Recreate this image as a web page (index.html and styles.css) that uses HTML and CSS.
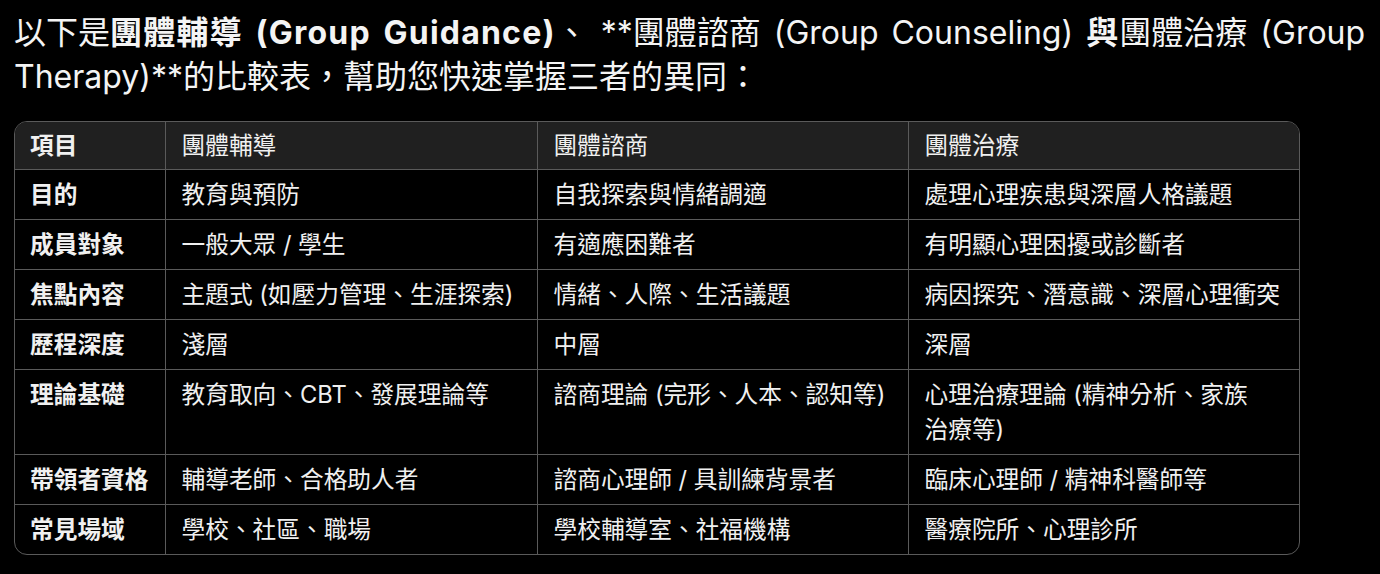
FILE: index.html
```html
<!DOCTYPE html>
<html lang="zh-Hant">
<head>
<meta charset="utf-8">
<title>團體輔導、團體諮商與團體治療比較表</title>
<link rel="stylesheet" href="styles.css">
</head>
<body>
<main class="page">
  <p class="intro">以下是<strong>團體輔導 (Group Guidance)</strong>、 **團體諮商 (Group Counseling) <strong>與</strong>團體治療 (Group Therapy)**的比較表，幫助您快速掌握三者的異同：</p>
  <div class="table-wrap">
    <table class="compare">
      <colgroup>
        <col class="c1"><col class="c2"><col class="c3"><col class="c4">
      </colgroup>
      <thead>
        <tr><th class="key">項目</th><th>團體輔導</th><th>團體諮商</th><th>團體治療</th></tr>
      </thead>
      <tbody>
        <tr><td class="key">目的</td><td>教育與預防</td><td>自我探索與情緒調適</td><td>處理心理疾患與深層人格議題</td></tr>
        <tr><td class="key">成員對象</td><td>一般大眾 / 學生</td><td>有適應困難者</td><td>有明顯心理困擾或診斷者</td></tr>
        <tr><td class="key">焦點內容</td><td>主題式 (如壓力管理、生涯探索)</td><td>情緒、人際、生活議題</td><td>病因探究、潛意識、深層心理衝突</td></tr>
        <tr><td class="key">歷程深度</td><td>淺層</td><td>中層</td><td>深層</td></tr>
        <tr><td class="key">理論基礎</td><td>教育取向、CBT、發展理論等</td><td>諮商理論 (完形、人本、認知等)</td><td>心理治療理論 (精神分析、家族<br>治療等)</td></tr>
        <tr><td class="key">帶領者資格</td><td>輔導老師、合格助人者</td><td>諮商心理師 / 具訓練背景者</td><td>臨床心理師 / 精神科醫師等</td></tr>
        <tr><td class="key">常見場域</td><td>學校、社區、職場</td><td>學校輔導室、社福機構</td><td>醫療院所、心理診所</td></tr>
      </tbody>
    </table>
  </div>
</main>
</body>
</html>
```

FILE: styles.css
```css
html, body {
  margin: 0;
  padding: 0;
  background: #000;
}
body {
  color: #f2f2f2;
  font-family: "Inter", "Noto Sans CJK TC", "Noto Sans", sans-serif;
}
.page {
  padding: 11px 0 0 14px;
}
.intro {
  margin: 0 0 22px 0;
  font-size: 32px;
  line-height: 44px;
  font-weight: 400;
  word-spacing: 4px;
  color: #f4f4f4;
}
.intro strong {
  font-weight: 700;
  letter-spacing: 1.2px;
}
.table-wrap {
  width: 1284px;
  border: 1px solid #5a5a5a;
  border-radius: 13px;
  overflow: hidden;
}
.compare {
  width: 100%;
  border-collapse: collapse;
  table-layout: fixed;
  font-size: 23.7px;
  line-height: 35px;
}
.c1 { width: 150px; }
.c2 { width: 372px; }
.c3 { width: 371px; }
.c4 { width: auto; }
.compare th,
.compare td {
  text-align: left;
  vertical-align: top;
  padding: 7px 16px 7px 16px;
  border: 1px solid #5a5a5a;
  color: #f0f0f0;
}
.compare thead th {
  background: #202020;
  font-weight: 400;
  padding-top: 6px;
  padding-bottom: 6px;
}
.compare tr:first-child th { border-top: none; }
.compare tr:last-child td { border-bottom: none; }
.compare th:first-child,
.compare td:first-child { border-left: none; padding-left: 15px; }
.compare th:last-child,
.compare td:last-child { border-right: none; }
.compare .key {
  font-weight: 700;
}
```
